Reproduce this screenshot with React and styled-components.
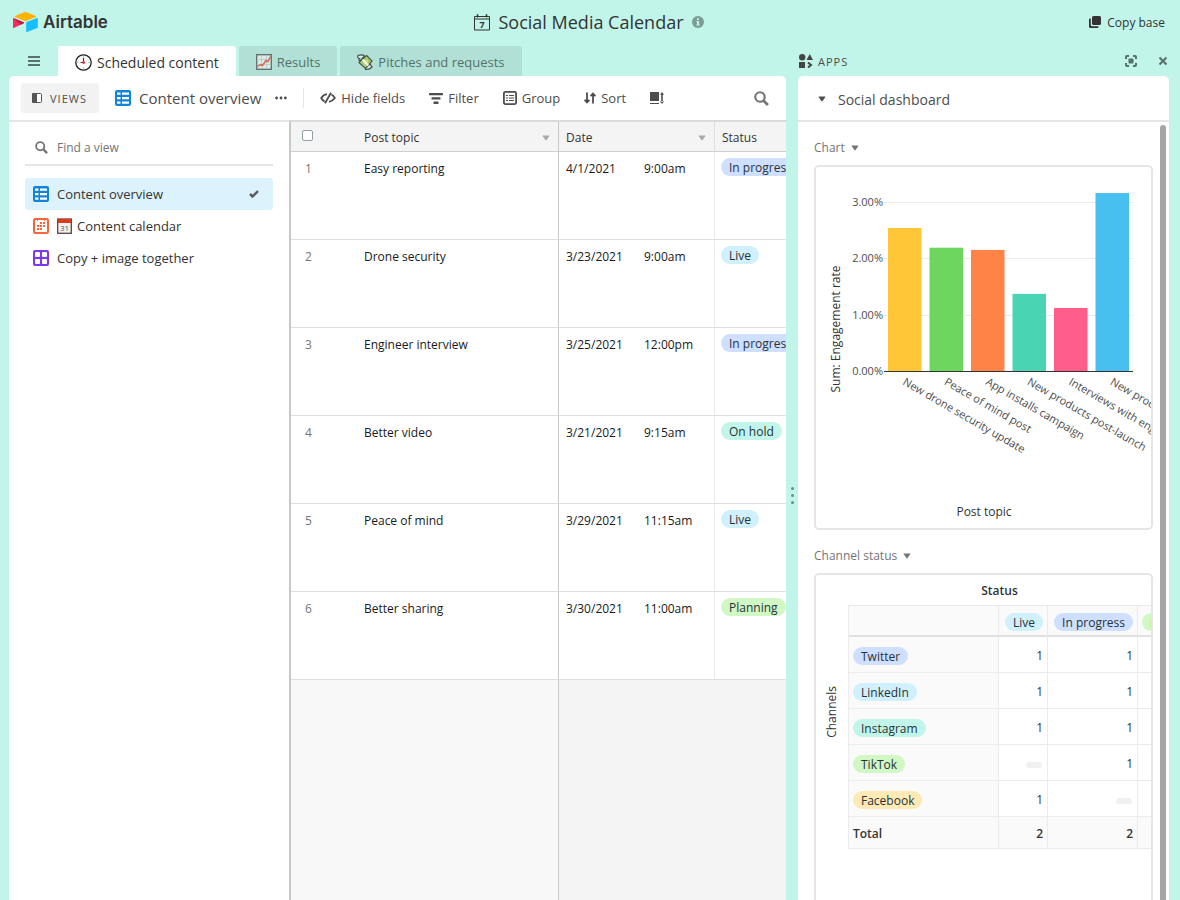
import React from "react";
import styled, { createGlobalStyle } from "styled-components";

const color = {
  mint: "#c2f5e9",
  dark: "#333333",
  text: "#4d4d4d",
  muted: "#757575",
  line: "#e5e5e5",
  blue: "#cfdfff",
  cyan: "#d0f0fd",
  teal: "#c2f5e9",
  green: "#d1f7c4",
  yellow: "#ffeab6",
};

const GlobalStyle = createGlobalStyle`
  * {
    box-sizing: border-box;
  }
  body {
    margin: 0;
    background: ${color.mint};
    font-family: "Open Sans", "Noto Sans", sans-serif;
    font-size: 12px;
    color: ${color.dark};
  }
  button, input {
    font-family: inherit;
    font-size: inherit;
    color: inherit;
  }
  button {
    border: none;
    background: none;
    padding: 0;
    cursor: pointer;
  }
  svg {
    display: block;
    flex: none;
  }
`;

const Page = styled.div`
  height: 100vh;
  display: flex;
  flex-direction: column;
  overflow: hidden;
`;

const TopBar = styled.header`
  flex: none;
  height: 46px;
  padding: 0 15px 2px 13px;
  display: grid;
  grid-template-columns: 1fr auto 1fr;
  align-items: center;
`;

const Brand = styled.a`
  display: flex;
  align-items: center;
  gap: 5px;
  font-family: Inter, sans-serif;
  font-size: 17px;
  font-weight: 600;
  color: ${color.dark};
  text-decoration: none;
`;

const BaseTitle = styled.h1`
  margin: 0;
  display: flex;
  align-items: center;
  gap: 8px;
  font-size: 18px;
  font-weight: 500;
`;

const CopyButton = styled.button`
  justify-self: end;
  display: flex;
  align-items: center;
  gap: 6px;
`;

const Body = styled.div`
  flex: 1;
  min-height: 0;
  display: flex;
  padding: 0 11px 0 9px;
`;

const Column = styled.section`
  flex: ${(p) => (p.$width ? `0 0 ${p.$width}` : "1")};
  min-width: 0;
  display: flex;
  flex-direction: column;
`;

const Panel = styled.div`
  flex: 1;
  min-height: 0;
  display: flex;
  flex-direction: column;
  overflow: hidden;
  background: white;
  border-radius: 5px 5px 0 0;
`;

const Splitter = styled.div`
  flex: 0 0 12px;
  display: flex;
  flex-direction: column;
  align-items: center;
  justify-content: center;
  gap: 4px;
  margin-top: 45px;
`;

const Dot = styled.span`
  width: 3px;
  height: 3px;
  border-radius: 2px;
  background: #6f8c85;
`;

const Tabs = styled.nav`
  flex: none;
  height: 30px;
  display: flex;
  gap: 3px;
`;

const MenuButton = styled.button`
  width: 46px;
  display: flex;
  align-items: center;
  padding-left: 19px;
`;

const Tab = styled.button`
  display: flex;
  align-items: center;
  gap: 5px;
  padding: 2px 17px 0;
  border-radius: 3px 3px 0 0;
  font-size: ${(p) => (p.$active ? "14px" : "13px")};
  white-space: nowrap;
  font-weight: ${(p) => (p.$active ? 500 : 400)};
  color: ${(p) => (p.$active ? color.dark : "#56706a")};
  background: ${(p) => (p.$active ? "white" : "#b1e1d6")};
`;

const Toolbar = styled.div`
  flex: none;
  height: 44px;
  display: flex;
  align-items: center;
  padding: 0 17px 0 12px;
  color: ${color.text};
`;

const ViewsButton = styled.button`
  display: flex;
  align-items: center;
  gap: 8px;
  width: 78px;
  height: 30px;
  padding-left: 11px;
  border-radius: 3px;
  background: #f2f2f2;
  font-size: 11px;
  letter-spacing: 1px;
`;

const ViewName = styled.button`
  display: flex;
  align-items: center;
  gap: 8px;
  margin-left: 16px;
  font-size: 15px;
  font-weight: 500;
  white-space: nowrap;
`;

const MoreButton = styled.button`
  margin-left: 14px;
`;

const Rule = styled.span`
  width: 1px;
  height: 20px;
  margin: 0 16px;
  background: ${color.line};
`;

const Tools = styled.div`
  flex: 1;
  display: flex;
  align-items: center;
  gap: 24px;
`;

const Tool = styled.button`
  display: flex;
  align-items: center;
  gap: 5px;
  font-size: 13px;
  font-weight: 500;
  white-space: nowrap;
`;

const Workspace = styled.div`
  flex: 1;
  min-height: 0;
  display: flex;
`;

const Sidebar = styled.aside`
  flex: 0 0 280px;
  padding: 8px 16px;
  border-top: 2px solid ${color.line};
`;

const Search = styled.label`
  display: flex;
  align-items: center;
  gap: 9px;
  height: 36px;
  padding-left: 10px;
  border-bottom: 2px solid ${color.line};
  color: ${color.muted};
`;

const SearchInput = styled.input`
  flex: 1;
  min-width: 0;
  border: none;
  outline: none;
  padding: 0;
  &::placeholder {
    color: ${color.muted};
    opacity: 1;
  }
`;

const ViewList = styled.ul`
  list-style: none;
  margin: 12px 0 0;
  padding: 0;
`;

const ViewItem = styled.button`
  width: 100%;
  height: 32px;
  padding: 0 14px 0 8px;
  display: flex;
  align-items: center;
  gap: 8px;
  border-radius: 3px;
  font-size: 13px;
  font-weight: 500;
  text-align: left;
  background: ${(p) => (p.$active ? "#dcf3fd" : "transparent")};
`;

const ViewLabel = styled.span`
  flex: 1;
  display: flex;
  align-items: center;
  gap: 5px;
`;

const Grid = styled.div`
  flex: 1;
  min-width: 0;
  display: flex;
  flex-direction: column;
  overflow: hidden;
  border-top: 2px solid #dadada;
  border-left: 2px solid #c8c8c8;
`;

const Records = styled.table`
  width: 100%;
  table-layout: fixed;
  border-collapse: separate;
  border-spacing: 0;
`;

const HeadCell = styled.th`
  width: ${(p) => p.$width || "auto"};
  height: 30px;
  padding: 2px 8px 0 7px;
  text-align: left;
  font-weight: 400;
  background: #f4f4f4;
  border-bottom: 1px solid #cfcfcf;
  border-right: ${(p) => (p.$edge ? `1px solid ${p.$edge}` : "none")};
`;

const HeadLabel = styled.span`
  display: flex;
  align-items: center;
  justify-content: space-between;
`;

const CheckBox = styled.input`
  appearance: none;
  display: block;
  width: 11px;
  height: 11px;
  margin: 0 0 4px 4px;
  border: 1px solid #8fa0a8;
  border-radius: 2px;
  background: white;
`;

const Cell = styled.td`
  height: 88px;
  padding: 6px 6px 0 ${(p) => (p.$pill ? "6px" : "7px")};
  vertical-align: top;
  line-height: 21px;
  color: ${(p) => (p.$muted ? color.muted : "#1a1a1a")};
  white-space: nowrap;
  overflow: hidden;
  background: white;
  border-bottom: 1px solid #dedede;
  border-right: ${(p) => (p.$edge ? `1px solid ${p.$edge}` : "none")};
`;

const RowNumber = styled.span`
  padding-left: 7px;
`;

const DateTime = styled.span`
  display: grid;
  grid-template-columns: 78px 1fr;
`;

const Pill = styled.span`
  display: inline-block;
  height: 18px;
  padding: 0 8px;
  border-radius: 9px;
  line-height: 20px;
  vertical-align: top;
  white-space: nowrap;
  color: #263238;
  background: ${(p) => color[p.$tone]};
`;

const Filler = styled.div`
  flex: 1;
  display: grid;
  grid-template-columns: 268px 1fr;
  background: #f4f4f4;
`;

const FillerLeft = styled.div`
  background: #f8f8f8;
  border-right: 1px solid #c8c8c8;
`;

const AppsBar = styled.div`
  flex: none;
  height: 30px;
  display: flex;
  align-items: center;
  gap: 21px;
  padding: 0 1px;
  color: ${color.muted};
`;

const AppsTitle = styled.h2`
  flex: 1;
  margin: 0;
  display: flex;
  align-items: center;
  gap: 5px;
  font-size: 11px;
  font-weight: 500;
  letter-spacing: 1px;
  color: ${color.text};
`;

const DashboardButton = styled.button`
  flex: none;
  height: 46px;
  padding: 2px 20px 0;
  display: flex;
  align-items: center;
  gap: 12px;
  border-bottom: 2px solid ${color.line};
  font-size: 14px;
  font-weight: 500;
  color: ${color.text};
`;

const Scroller = styled.div`
  flex: 1;
  min-height: 0;
  display: flex;
  gap: 7px;
  padding: 0 3px 0 16px;
  overflow: hidden;
`;

const Widgets = styled.div`
  flex: 1;
  min-width: 0;
  display: flex;
  flex-direction: column;
`;

const ScrollThumb = styled.div`
  flex: 0 0 6px;
  margin-top: 3px;
  border-radius: 3px 3px 0 0;
  background: #a5a5a5;
`;

const WidgetTitle = styled.button`
  flex: none;
  align-self: flex-start;
  display: flex;
  align-items: center;
  gap: 6px;
  height: 43px;
  padding-top: 8px;
  color: ${color.muted};
`;

const Card = styled.div`
  flex: none;
  height: ${(p) => p.$height};
  overflow: hidden;
  border: 2px solid ${color.line};
  border-radius: 5px;
`;

const PivotLayout = styled.div`
  display: flex;
  align-items: center;
`;

const SideTitle = styled.h3`
  flex: 0 0 32px;
  margin: 0;
  writing-mode: vertical-rl;
  transform: rotate(180deg);
  line-height: 32px;
  text-align: center;
  font-size: 12px;
  font-weight: 500;
`;

const PivotMain = styled.div`
  flex: 1;
  min-width: 0;
  overflow: hidden;
`;

const PivotTitle = styled.h3`
  margin: 0;
  height: 30px;
  line-height: 31px;
  text-align: center;
  font-size: 12px;
  font-weight: 600;
`;

const Pivot = styled.table`
  width: 380px;
  table-layout: fixed;
  border-collapse: separate;
  border-spacing: 0;
  border-left: 1px solid #ebebeb;
  border-top: 1px solid #ebebeb;
`;

const PivotCell = styled.td`
  width: ${(p) => p.$width || "auto"};
  height: ${(p) => p.$height || "36px"};
  padding: 2px 4px 0;
  text-align: ${(p) => p.$align || "right"};
  font-weight: ${(p) => (p.$bold ? 600 : 400)};
  background: ${(p) => (p.$shade ? "#fafafa" : "white")};
  border-right: 1px solid #ebebeb;
  border-bottom: ${(p) => p.$rule || 1}px solid ${(p) => (p.$rule ? "#e0e0e0" : "#ebebeb")};
`;

const Empty = styled.span`
  display: block;
  width: 16px;
  height: 6px;
  margin: 2px 1px 0 auto;
  border-radius: 3px;
  background: #f0f0f0;
`;

const Caret = ({ fill = "currentColor" }) => (
  <svg width="8" height="6" viewBox="0 0 8 6" fill={fill}>
    <path d="M1 .5h6q.7 0 .4.600L4.600 5q-.6.700-1.200 0L.6 1.100Q.3.500 1 .5z" />
  </svg>
);

const LogoMark = () => (
  <svg width="25" height="20" viewBox="0 0 25 20">
    <path fill="#fcb400" d="M11.2.3 2 4.1q-.9.5 0 .9l9.300 3.700q1.100.4 2.200 0L22.800 5q.9-.4 0-.9L13.600.3q-1.200-.5-2.400 0z" />
    <path fill="#18bfff" d="M13.200 10.800v8.600q0 .8.700.5l10.500-4q.4-.2.4-.7V6.600q0-.8-.7-.5l-10.500 4q-.4.200-.4.700z" />
    <path fill="#f82b60" d="M10.800 11.200.8 15.900q-.8.200-.8-.5V6.700q0-.7.8-.4l9.800 4q.8.4.2.9z" />
    <path fill="#ba1e45" d="m10.800 11.200-3.100 1.500L.3 6.300q.2-.1.500 0l9.800 4q.8.4.2.9z" />
  </svg>
);

const SevenIcon = () => (
  <svg width="16" height="17" viewBox="0 0 16 17" fill="none" stroke="#333">
    <path d="M.5 2.500h15v13.500H.5zM.5 5h15M3.500.500v3M12.500.500v3" />
    <path d="M2.500 1h2M11.500 1h2" />
    <text x="8" y="14" textAnchor="middle" fontSize="9" fontWeight="700" fill="#333" stroke="none">7</text>
  </svg>
);

const InfoIcon = () => (
  <svg width="12" height="12" viewBox="0 0 12 12">
    <circle cx="6" cy="6" r="6" fill="#7c9c95" />
    <path fill={color.mint} d="M5 2.200h2v1.700H5zM4.300 5H7v3.500h.8v1H4.300v-1H5V6h-.7z" />
  </svg>
);

const CopyIcon = () => (
  <svg width="12" height="12" viewBox="0 0 12 12" fill="#333">
    <rect x="3" y="0" width="9" height="9" rx="1.500" />
    <path d="M0 3.500Q0 2.500 1 2.500h.8V9q0 1.200 1.200 1.200h6.500v.6q0 1.200-1 1.200H1.500Q0 12 0 10.500z" />
  </svg>
);

const MenuIcon = () => (
  <svg width="12" height="10" viewBox="0 0 12 10" fill="#5a726c">
    <path d="M0 0h12v2H0zM0 4h12v2H0zM0 8h12v2H0z" />
  </svg>
);

const ClockIcon = () => (
  <svg width="17" height="17" viewBox="0 0 17 17">
    <circle cx="8.500" cy="8.500" r="7.700" fill="#fafafa" stroke="#222" strokeWidth="1.300" />
    <path d="M8.500 2.500v1M8.500 13.500v1M2.500 8.500h1M13.500 8.500h1" stroke="#999" />
    <path d="M8.500 4v4.500H5.500" fill="none" stroke="#444" strokeWidth="1.200" />
    <circle cx="8.700" cy="8.700" r="1.400" fill="#e8384f" />
  </svg>
);

const TrendIcon = () => (
  <svg width="16" height="16" viewBox="0 0 16 16">
    <rect x=".7" y=".7" width="14.600" height="14.600" fill="#dce9e5" stroke="#63736f" strokeWidth="1.400" />
    <path d="M1 5.500h14M1 10.500h14M5.500 1v14M10.500 1v14" stroke="#b3c5c0" strokeWidth=".7" />
    <path d="m1.500 12.500 3-2 2 1 3.500-5 2 1 2.500-5" fill="none" stroke="#d9664f" strokeWidth="1.400" />
  </svg>
);

const MoneyIcon = () => (
  <svg width="16" height="16" viewBox="0 0 16 16" stroke="#3f524d" strokeWidth="1.200">
    <path fill="#dcebe6" d="M1 1.500q4-1.500 6.500.5L3 7Q1 6 2.500 4.500 0 4 1 1.500zM8.500 15.300q4 .5 6.500-2.300l-2-3-4.500 3.500z" />
    <path fill="#c9e07f" d="M9.500 1.500 15 7l-6.500 7.500L2 8.500z" />
    <path fill="none" stroke="#93ad4f" strokeWidth="1" d="M9.500 4 12.500 7l-4 4.700L4.800 8.500z" />
    <path stroke="#f3f7ef" strokeWidth="2" d="m5.500 5.500 5.800 6" />
  </svg>
);

const PanelIcon = () => (
  <svg width="10" height="10" viewBox="0 0 10 10">
    <rect x=".5" y=".5" width="9" height="9" rx="1" fill="white" stroke="#555" />
    <path fill="#555" d="M1 0h4v10H1q-1 0-1-1V1q0-1 1-1z" />
  </svg>
);

const GridIcon = () => (
  <svg width="16" height="16" viewBox="0 0 16 16">
    <rect width="16" height="16" rx="2" fill="#1283da" />
    <path fill="white" d="M2 2.500h3.500v2.200H2zM7 2.500h7v2.200H7zM2 7h3.500v2.200H2zM7 7h7v2.200H7zM2 11.500h3.500v2.200H2zM7 11.500h7v2.200H7z" />
  </svg>
);

const CalendarIcon = () => (
  <svg width="16" height="16" viewBox="0 0 16 16">
    <rect x="1" y="1" width="14" height="14" rx="1.500" fill="white" stroke="#f7653b" strokeWidth="2" />
    <path
      fill="#f7653b"
      d="M4 1h1v2H4zM11 1h1v2h-1zM7 4h2v2H7zM10 4h2v2h-2zM4 7h2v2H4zM7 7h2v2H7zM10 7h2v2h-2zM4 10h2v2H4zM7 10h2v2H7z"
    />
  </svg>
);

const GalleryIcon = () => (
  <svg width="16" height="16" viewBox="0 0 16 16">
    <rect width="16" height="16" rx="2" fill="#7c39ed" />
    <g fill="white">
      <rect x="2" y="2" width="5" height="5" rx="1" />
      <rect x="9" y="2" width="5" height="5" rx="1" />
      <rect x="2" y="9" width="5" height="5" rx="1" />
      <rect x="9" y="9" width="5" height="5" rx="1" />
    </g>
  </svg>
);

const Day31Icon = () => (
  <svg width="15" height="16" viewBox="0 0 15 16">
    <rect x=".7" y="1" width="13.600" height="14.300" fill="#f3f3f3" stroke="#5a4440" strokeWidth="1.300" />
    <path fill="#dd3b20" d="M1 1h13v4H1z" />
    <text x="7.500" y="13" textAnchor="middle" fontSize="8" fill="#555">31</text>
  </svg>
);

const DotsIcon = () => (
  <svg width="12" height="4" viewBox="0 0 12 4" fill="#4d4d4d">
    <circle cx="1.600" cy="2" r="1.400" />
    <circle cx="6" cy="2" r="1.400" />
    <circle cx="10.400" cy="2" r="1.400" />
  </svg>
);

const HideIcon = () => (
  <svg width="16" height="12" viewBox="0 0 16 12" fill="none" stroke="#4d4d4d" strokeWidth="1.800">
    <path d="M7 2.200Q3.500 2.700 1.200 6 2.500 8.500 4.500 9.300M9 9.800q3.500-.5 5.800-3.800-1.300-2.500-3.300-3.300M11 .8 5 11.200M8.800 4.500 7.200 7.500" />
  </svg>
);

const FilterIcon = () => (
  <svg width="14" height="11" viewBox="0 0 14 11" fill="#4d4d4d">
    <rect width="14" height="2.300" rx=".6" />
    <rect x="2.500" y="4.300" width="9" height="2.300" rx=".6" />
    <rect x="4.500" y="8.600" width="5" height="2.300" rx=".6" />
  </svg>
);

const GroupIcon = () => (
  <svg width="14" height="14" viewBox="0 0 14 14">
    <rect x=".9" y=".9" width="12.200" height="12.200" rx="1.500" fill="none" stroke="#4d4d4d" strokeWidth="1.800" />
    <path d="M3 4.500h2M6 4.500h5M3 7h2M6 7h5M3 9.500h2M6 9.500h5" stroke="#4d4d4d" strokeWidth="1.200" />
  </svg>
);

const SortIcon = () => (
  <svg width="12" height="12" viewBox="0 0 12 12" fill="none" stroke="#4d4d4d" strokeWidth="1.800">
    <path d="M3 .5v10M.6 7.800 3 10.500l2.400-2.700M9 11.500V1.500M6.600 4.200 9 1.500l2.400 2.700" />
  </svg>
);

const HeightIcon = () => (
  <svg width="14" height="12" viewBox="0 0 14 12" fill="#4d4d4d">
    <path d="M0 0h9v9H0zM0 11h9v1H0zM11.200 2h1.600v8h-1.600zM12 0l2 2.800h-4zM12 12l2-2.800h-4z" />
  </svg>
);

const SearchIcon = ({ size = 13 }) => (
  <svg width={size} height={size} viewBox="0 0 14 14" fill="none" stroke="#757575" strokeWidth="2">
    <circle cx="5.600" cy="5.600" r="4.400" />
    <path d="m9 9 4 4" strokeWidth="2.600" />
  </svg>
);

const CheckIcon = () => (
  <svg width="10" height="8" viewBox="0 0 10 8" fill="none" stroke="#5c5c5c" strokeWidth="2.500">
    <path d="m1 4 2.500 2.500L9 1.200" />
  </svg>
);

const AppsIcon = () => (
  <svg width="14" height="14" viewBox="0 0 14 14" fill="#444">
    <circle cx="3.200" cy="3.200" r="3.200" />
    <path d="m10.800 0 3.200 6H7.500zM0 8h6v6H0z" />
    <path d="m9 8.500 3 2.500-3 2.500" fill="none" stroke="#444" strokeWidth="2" />
  </svg>
);

const ExpandIcon = () => (
  <svg width="12" height="12" viewBox="0 0 12 12">
    <path d="M1 4V2q0-1 1-1h2M8 1h2q1 0 1 1v2M11 8v2q0 1-1 1H8M4 11H2q-1 0-1-1V8" fill="none" stroke="#56706a" strokeWidth="2" />
    <rect x="3.500" y="3.500" width="5" height="5" rx="1" fill="#56706a" />
  </svg>
);

const CloseIcon = () => (
  <svg width="10" height="10" viewBox="0 0 10 10" stroke="#56706a" strokeWidth="2">
    <path d="m1.500 1.500 7 7M8.500 1.500l-7 7" />
  </svg>
);

const records = [
  { topic: "Easy reporting", date: "4/1/2021", time: "9:00am", status: "In progress", tone: "blue" },
  { topic: "Drone security", date: "3/23/2021", time: "9:00am", status: "Live", tone: "cyan" },
  { topic: "Engineer interview", date: "3/25/2021", time: "12:00pm", status: "In progress", tone: "blue" },
  { topic: "Better video", date: "3/21/2021", time: "9:15am", status: "On hold", tone: "teal" },
  { topic: "Peace of mind", date: "3/29/2021", time: "11:15am", status: "Live", tone: "cyan" },
  { topic: "Better sharing", date: "3/30/2021", time: "11:00am", status: "Planning", tone: "green" },
];

const bars = [
  { label: "New drone security update", value: 2.54, fill: "#ffc738" },
  { label: "Peace of mind post", value: 2.19, fill: "#6dd65e" },
  { label: "App installs campaign", value: 2.15, fill: "#ff8347" },
  { label: "New products post-launch", value: 1.37, fill: "#49d5b4" },
  { label: "Interviews with engineers", value: 1.12, fill: "#ff5e8a" },
  { label: "New product launch", value: 3.16, fill: "#47c0f0" },
];

const channels = [
  { name: "Twitter", tone: "blue", live: 1, progress: 1 },
  { name: "LinkedIn", tone: "cyan", live: 1, progress: 1 },
  { name: "Instagram", tone: "teal", live: 1, progress: 1 },
  { name: "TikTok", tone: "green", live: null, progress: 1 },
  { name: "Facebook", tone: "yellow", live: 1, progress: null },
];

const BASE = 204;
const UNIT = 56.3;

const BarChart = () => (
  <svg width="335" height="361" viewBox="0 0 335 361" fontSize="12" fill="#4d4d4d">
    {[0, 1, 2, 3].map((n) => (
      <g key={n}>
        <rect x="68" y={Math.round(BASE - n * UNIT)} width="249" height="1" fill="#ebebeb" />
        <text x="67" y={Math.round(BASE - n * UNIT) + 4} textAnchor="end" fontSize="11">
          {n}.00%
        </text>
      </g>
    ))}
    {bars.map((bar, i) => {
      const x = 72 + i * 41.5;
      return (
        <g key={bar.label}>
          <rect x={x} y={BASE - bar.value * UNIT} width="33.500" height={bar.value * UNIT} fill={bar.fill} />
          <text transform={`translate(${x + 14} 217) rotate(30)`} fontSize="11">
            {bar.label}
          </text>
        </g>
      );
    })}
    <rect x="68" y={BASE} width="249" height="1" fill="#333" />
    <text transform="translate(24 162) rotate(-90)" textAnchor="middle" fill="#333">
      Sum: Engagement rate
    </text>
    <text x="168" y="349" textAnchor="middle" fill="#333">
      Post topic
    </text>
  </svg>
);

const RecordGrid = () => (
  <Grid>
    <Records>
      <thead>
        <tr>
          <HeadCell $width="66px">
            <CheckBox type="checkbox" aria-label="Select all records" />
          </HeadCell>
          <HeadCell $width="202px" $edge="#c8c8c8">
            <HeadLabel>
              Post topic <Caret fill="#aaa" />
            </HeadLabel>
          </HeadCell>
          <HeadCell $width="156px" $edge="#dedede">
            <HeadLabel>
              Date <Caret fill="#aaa" />
            </HeadLabel>
          </HeadCell>
          <HeadCell>Status</HeadCell>
        </tr>
      </thead>
      <tbody>
        {records.map((record, i) => (
          <tr key={record.topic}>
            <Cell $muted>
              <RowNumber>{i + 1}</RowNumber>
            </Cell>
            <Cell $edge="#c8c8c8">{record.topic}</Cell>
            <Cell $edge="#ebebeb">
              <DateTime>
                <span>{record.date}</span>
                <span>{record.time}</span>
              </DateTime>
            </Cell>
            <Cell $pill>
              <Pill $tone={record.tone}>{record.status}</Pill>
            </Cell>
          </tr>
        ))}
      </tbody>
    </Records>
    <Filler>
      <FillerLeft />
    </Filler>
  </Grid>
);

const ChannelPivot = () => (
  <PivotLayout>
    <SideTitle>Channels</SideTitle>
    <PivotMain>
      <PivotTitle>Status</PivotTitle>
      <Pivot>
        <thead>
          <tr>
            <PivotCell as="th" $width="150px" $height="31px" $rule={2} $shade />
            <PivotCell as="th" $width="49px" $height="31px" $rule={2} $shade>
              <Pill $tone="cyan">Live</Pill>
            </PivotCell>
            <PivotCell as="th" $width="90px" $height="31px" $rule={2} $shade>
              <Pill $tone="blue">In progress</Pill>
            </PivotCell>
            <PivotCell as="th" $height="31px" $rule={2} $shade $align="left">
              <Pill $tone="green">Planning</Pill>
            </PivotCell>
          </tr>
        </thead>
        <tbody>
          {channels.map((channel) => (
            <tr key={channel.name}>
              <PivotCell $align="left" $shade>
                <Pill $tone={channel.tone}>{channel.name}</Pill>
              </PivotCell>
              <PivotCell>{channel.live || <Empty />}</PivotCell>
              <PivotCell>{channel.progress || <Empty />}</PivotCell>
              <PivotCell />
            </tr>
          ))}
          <tr>
            <PivotCell $align="left" $height="32px" $shade $bold>
              Total
            </PivotCell>
            <PivotCell $height="32px" $shade $bold>
              2
            </PivotCell>
            <PivotCell $height="32px" $shade $bold>
              2
            </PivotCell>
            <PivotCell $height="32px" $shade />
          </tr>
        </tbody>
      </Pivot>
    </PivotMain>
  </PivotLayout>
);

export default function App() {
  return (
    <Page>
      <GlobalStyle />
      <TopBar>
        <Brand href="#">
          <LogoMark />
          Airtable
        </Brand>
        <BaseTitle>
          <SevenIcon />
          Social Media Calendar
          <InfoIcon />
        </BaseTitle>
        <CopyButton>
          <CopyIcon />
          Copy base
        </CopyButton>
      </TopBar>
      <Body>
        <Column>
          <Tabs>
            <MenuButton aria-label="Menu">
              <MenuIcon />
            </MenuButton>
            <Tab $active>
              <ClockIcon />
              Scheduled content
            </Tab>
            <Tab>
              <TrendIcon />
              Results
            </Tab>
            <Tab>
              <MoneyIcon />
              Pitches and requests
            </Tab>
          </Tabs>
          <Panel>
            <Toolbar>
              <ViewsButton>
                <PanelIcon />
                VIEWS
              </ViewsButton>
              <ViewName>
                <GridIcon />
                Content overview
              </ViewName>
              <MoreButton aria-label="View options">
                <DotsIcon />
              </MoreButton>
              <Rule />
              <Tools>
                <Tool>
                  <HideIcon />
                  Hide fields
                </Tool>
                <Tool>
                  <FilterIcon />
                  Filter
                </Tool>
                <Tool>
                  <GroupIcon />
                  Group
                </Tool>
                <Tool>
                  <SortIcon />
                  Sort
                </Tool>
                <Tool aria-label="Row height">
                  <HeightIcon />
                </Tool>
              </Tools>
              <Tool aria-label="Search records">
                <SearchIcon size={15} />
              </Tool>
            </Toolbar>
            <Workspace>
              <Sidebar>
                <Search>
                  <SearchIcon />
                  <SearchInput placeholder="Find a view" aria-label="Find a view" />
                </Search>
                <ViewList>
                  <li>
                    <ViewItem $active>
                      <GridIcon />
                      <ViewLabel>Content overview</ViewLabel>
                      <CheckIcon />
                    </ViewItem>
                  </li>
                  <li>
                    <ViewItem>
                      <CalendarIcon />
                      <ViewLabel>
                        <Day31Icon />
                        Content calendar
                      </ViewLabel>
                    </ViewItem>
                  </li>
                  <li>
                    <ViewItem>
                      <GalleryIcon />
                      <ViewLabel>Copy + image together</ViewLabel>
                    </ViewItem>
                  </li>
                </ViewList>
              </Sidebar>
              <RecordGrid />
            </Workspace>
          </Panel>
        </Column>
        <Splitter>
          <Dot />
          <Dot />
          <Dot />
        </Splitter>
        <Column $width="371px">
          <AppsBar>
            <AppsTitle>
              <AppsIcon />
              APPS
            </AppsTitle>
            <button aria-label="Fullscreen">
              <ExpandIcon />
            </button>
            <button aria-label="Close apps">
              <CloseIcon />
            </button>
          </AppsBar>
          <Panel>
            <DashboardButton>
              <Caret />
              Social dashboard
            </DashboardButton>
            <Scroller>
              <Widgets>
                <WidgetTitle>
                  Chart <Caret />
                </WidgetTitle>
                <Card $height="365px">
                  <BarChart />
                </Card>
                <WidgetTitle>
                  Channel status <Caret />
                </WidgetTitle>
                <Card $height="365px">
                  <ChannelPivot />
                </Card>
              </Widgets>
              <ScrollThumb />
            </Scroller>
          </Panel>
        </Column>
      </Body>
    </Page>
  );
}
